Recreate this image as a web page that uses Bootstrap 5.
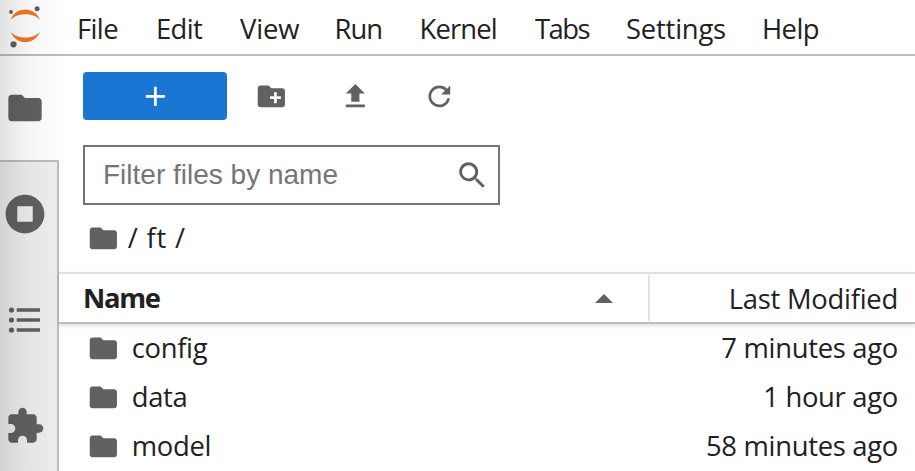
<!DOCTYPE html>
<html lang="en">
<head>
<meta charset="utf-8">
<meta name="viewport" content="width=device-width, initial-scale=1">
<title>JupyterLab</title>
<link href="https://cdn.jsdelivr.net/npm/bootstrap@5.3.0/dist/css/bootstrap.min.css" rel="stylesheet">
<style>
  body { font-family: "Segoe UI", "Open Sans", sans-serif; font-size: 27.4px; line-height: 36px; color: #212121; letter-spacing: -.3px; }
  svg { display: block; flex: none; fill: #616161; }
  .ico { width: 32.7px; height: 32.7px; }
  .ico-lg { width: 40px; height: 40px; }
  .app { height: 471px; }
  .menu-bar { height: 56px; border-bottom: 2px solid #bdbdbd; }
  .logo-box { width: 77px; }
  .menu-bar .nav-link { color: #212121; padding: 3px 0 0; white-space: nowrap; flex: none; letter-spacing: -.6px; }
  .menu-bar .m-file { width: 79px; }
  .menu-bar .m-edit { width: 84px; }
  .menu-bar .m-view { width: 94.5px; letter-spacing: -.1px; }
  .menu-bar .m-run { width: 85px; letter-spacing: -1px; }
  .menu-bar .m-kernel { width: 115.5px; letter-spacing: -.85px; }
  .menu-bar .m-tabs { width: 91px; letter-spacing: -1.5px; }
  .menu-bar .m-settings { width: 136px; letter-spacing: -.2px; }
  .side { width: 59px; }
  .side-tab { height: 106px; padding-right: 9px; }
  .side-tab.current { height: 104px; }
  .side-rest { background: #eee; border-top: 2px solid #bdbdbd; border-right: 2px solid #bdbdbd; }
  .side-rest .side-tab { padding: 0 7px 2px 0; }
  .tools { padding: 16px 0 0 24px; }
  .btn-new { width: 144px; height: 48px; background: #1976d2; border-radius: 4px; }
  .btn-new svg { fill: #fff; }
  .tool { width: 88px; height: 48px; }
  .tool-mid { width: 80px; }
  .filter { margin: 25px 0 0 24px; width: 417px; height: 60px; border: 2px solid #757575; padding: 0 10px 0 18px; }
  .filter input { font: 28px "Liberation Sans", Arial, sans-serif; letter-spacing: 0; color: #212121; outline: 0; min-width: 0; height: 40px; }
  .filter input::placeholder { color: #757575; opacity: 1; }
  .crumbs { height: 67px; padding: 0 0 1px 28px; }
  .crumb-text { letter-spacing: .8px; }
  .head-row { height: 52px; border-top: 2px solid #e0e0e0; border-bottom: 2px solid #bdbdbd; box-shadow: 0 2px 4px rgba(0,0,0,.13); }
  .head-name { width: 591px; padding: 0 35px 0 24px; height: 46px; border-right: 2px solid #e0e0e0; }
  .t-name { letter-spacing: -1.3px; }
  .head-time { padding: 1px 17px 0 0; letter-spacing: -.25px; }
  .file-row { height: 49px; padding: 0 17px 1px 28px; }
  .edge-shade { position: absolute; left: 0; top: 0; width: 74px; height: 471px; pointer-events: none;
    background: linear-gradient(to right, rgba(0,0,0,.115), rgba(0,0,0,.045) 35%, rgba(0,0,0,.01) 70%, transparent); }
</style>
</head>
<body class="bg-white overflow-hidden">
<svg width="0" height="0" class="position-absolute" aria-hidden="true">
  <symbol id="folder" viewBox="0 0 24 24"><path d="M10 4H4c-1.1 0-1.99.9-1.99 2L2 18c0 1.1.9 2 2 2h16c1.1 0 2-.9 2-2V8c0-1.1-.9-2-2-2h-8l-2-2z"/></symbol>
</svg>
<div class="app d-flex flex-column position-relative overflow-hidden">
  <header class="menu-bar d-flex align-items-stretch flex-shrink-0">
    <div class="logo-box flex-shrink-0">
      <svg width="50" height="54" viewBox="0 0 50 54">
        <g fill="#f37726"><path d="M10.6 20C13 13.500 18.600 9.500 25.300 9.500S37.600 13.500 40 20C36.800 16.300 31.500 14.200 25.300 14.200S13.800 16.300 10.600 20z"/><path d="M10.600 31.800C13 38.200 18.600 42.200 25.300 42.200S37.600 38.200 40 31.800C36.800 35.500 31.500 37.600 25.300 37.600S13.800 35.500 10.600 31.800z"/></g>
        <circle cx="11" cy="12" r="1.9"/><circle cx="37.1" cy="8.700" r="2.500"/><circle cx="13.500" cy="44.300" r="3.100"/>
      </svg>
    </div>
    <nav class="nav flex-nowrap align-items-center">
      <a class="nav-link m-file" href="#">File</a>
      <a class="nav-link m-edit" href="#">Edit</a>
      <a class="nav-link m-view" href="#">View</a>
      <a class="nav-link m-run" href="#">Run</a>
      <a class="nav-link m-kernel" href="#">Kernel</a>
      <a class="nav-link m-tabs" href="#">Tabs</a>
      <a class="nav-link m-settings" href="#">Settings</a>
      <a class="nav-link m-help" href="#">Help</a>
    </nav>
  </header>
  <div class="d-flex flex-grow-1">
    <aside class="side d-flex flex-column flex-shrink-0">
      <div class="side-tab current d-flex align-items-center justify-content-center"><svg class="ico-lg"><use href="#folder"/></svg></div>
      <div class="side-rest flex-grow-1">
        <div class="side-tab d-flex align-items-center justify-content-center"><svg class="ico-lg" viewBox="0 0 512 512"><path fill-rule="evenodd" d="M256 8C119 8 8 119 8 256s111 248 248 248 248-111 248-248S393 8 256 8zM355 355H157V157h198z"/></svg></div>
        <div class="side-tab d-flex align-items-center justify-content-center"><svg class="ico-lg" viewBox="0 0 40 40"><circle cx="6.500" cy="10" r="2.600"/><circle cx="6.500" cy="20" r="2.600"/><circle cx="6.500" cy="30" r="2.600"/><path d="M11.700 8.200H35v3.600H11.700zM11.700 18.200H35v3.600H11.700zM11.700 28.200H35v3.600H11.700z"/></svg></div>
        <div class="side-tab d-flex align-items-center justify-content-center"><svg class="ico-lg" viewBox="0 0 24 24"><path d="M20.500 11H19V7c0-1.100-.9-2-2-2h-4V3.500C13 2.120 11.880 1 10.500 1S8 2.120 8 3.500V5H4c-1.100 0-1.990.9-1.990 2v3.800H3.500c1.490 0 2.700 1.210 2.700 2.700s-1.210 2.700-2.700 2.700H2V20c0 1.100.9 2 2 2h3.800v-1.500c0-1.490 1.210-2.700 2.700-2.700 1.490 0 2.700 1.210 2.700 2.700V22H17c1.100 0 2-.9 2-2v-4h1.500c1.380 0 2.500-1.120 2.500-2.500S21.880 11 20.500 11z"/></svg></div>
      </div>
    </aside>
    <main class="flex-grow-1">
      <div class="tools d-flex">
        <button class="btn btn-new border-0 p-0 d-flex align-items-center justify-content-center" aria-label="New launcher"><svg class="ico" viewBox="0 0 24 24"><path d="M19 13h-6v6h-2v-6H5v-2h6V5h2v6h6v2z"/></svg></button>
        <button class="btn tool border-0 p-0 d-flex align-items-center justify-content-center" aria-label="New folder"><svg class="ico" viewBox="0 0 24 24"><path d="M20 6h-8l-2-2H4c-1.110 0-1.990.89-1.990 2L2 18c0 1.110.89 2 2 2h16c1.110 0 2-.89 2-2V8c0-1.110-.89-2-2-2zm-1 8h-3v3h-2v-3h-3v-2h3V9h2v3h3v2z"/></svg></button>
        <button class="btn tool tool-mid border-0 p-0 d-flex align-items-center justify-content-center" aria-label="Upload"><svg class="ico" viewBox="0 0 24 24"><path d="M9 16h6v-6h4l-7-7-7 7h4zm-4 2h14v2H5z"/></svg></button>
        <button class="btn tool border-0 p-0 d-flex align-items-center justify-content-center" aria-label="Refresh"><svg class="ico" viewBox="0 0 18 18"><path d="M9 13.500c-2.490 0-4.500-2.010-4.500-4.500S6.510 4.500 9 4.500c1.240 0 2.360.52 3.170 1.330L10 8h5V3l-1.760 1.760C12.150 3.680 10.660 3 9 3 5.690 3 3.010 5.690 3.010 9S5.690 15 9 15c2.970 0 5.430-2.160 5.900-5h-1.520c-.46 2-2.240 3.500-4.380 3.500z"/></svg></button>
      </div>
      <div class="filter d-flex align-items-center">
        <input class="border-0 p-0 flex-grow-1 bg-transparent" type="text" placeholder="Filter files by name">
        <svg width="32" height="32" viewBox="0 0 18 18"><path d="M12.100 10.900h-.7l-.2-.2c.8-.9 1.300-2.200 1.300-3.500 0-3-2.400-5.400-5.400-5.400S1.800 4.200 1.800 7.100s2.400 5.400 5.400 5.400c1.300 0 2.500-.5 3.500-1.300l.2.200v.7l4.100 4.100 1.200-1.200-4.100-4.100zM7.100 10.900c-2.100 0-3.700-1.700-3.700-3.700s1.700-3.700 3.700-3.700 3.700 1.700 3.700 3.700-1.600 3.700-3.700 3.700z"/></svg>
      </div>
      <div class="crumbs d-flex align-items-center">
        <svg class="ico"><use href="#folder"/></svg><span class="crumb-text ms-2">/ ft /</span>
      </div>
      <div class="head-row d-flex align-items-center">
        <div class="head-name d-flex align-items-center justify-content-between"><span class="t-name fw-bold">Name</span><svg width="18" height="9" viewBox="0 0 18 9"><path d="M0 9L9 0l9 9z"/></svg></div>
        <div class="head-time flex-grow-1 text-end">Last Modified</div>
      </div>
      <div class="file-row d-flex align-items-center"><svg class="ico"><use href="#folder"/></svg><span class="ms-2 ps-1">config</span><span class="ms-auto">7 minutes ago</span></div>
      <div class="file-row d-flex align-items-center"><svg class="ico"><use href="#folder"/></svg><span class="ms-2 ps-1">data</span><span class="ms-auto">1 hour ago</span></div>
      <div class="file-row d-flex align-items-center"><svg class="ico"><use href="#folder"/></svg><span class="ms-2 ps-1">model</span><span class="ms-auto">58 minutes ago</span></div>
    </main>
  </div>
  <div class="edge-shade"></div>
</div>
<script src="https://cdn.jsdelivr.net/npm/bootstrap@5.3.0/dist/js/bootstrap.bundle.min.js"></script>
</body>
</html>
